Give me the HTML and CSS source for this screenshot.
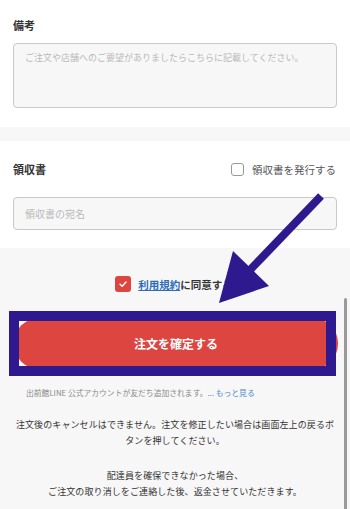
FILE: index.html
```html
<!DOCTYPE html>
<html lang="ja">
<head>
    <meta charset="UTF-8">
    <meta name="viewport" content="width=device-width, initial-scale=1.0">
    <title>注文確認</title>
    <link rel="stylesheet" href="styles.css">
</head>
<body>
    <div class="section note">
        <div class="label">備考</div>
        <textarea class="note-box" placeholder="ご注文や店舗へのご要望がありましたらこちらに記載してください。"></textarea>
    </div>

    <div class="section receipt">
        <div class="receipt-row">
            <div class="label">領収書</div>
            <label class="check-label">
                <span class="check-box"></span>
                領収書を発行する
            </label>
        </div>
        <input class="receipt-input" type="text" placeholder="領収書の宛名">
    </div>

    <div class="footer">
        <div class="agree">
            <span class="agree-box">
                <svg width="10" height="10" viewBox="0 0 10 10"><path d="M2 5.2 L4.2 7.2 L8 3" fill="none" stroke="#fff" stroke-width="1.4" stroke-linecap="round" stroke-linejoin="round"/></svg>
            </span>
            <a class="terms" href="#">利用規約</a><span class="agree-text">に同意する</span>
        </div>

        <div class="confirm">
            <button class="confirm-btn">注文を確定する</button>
            <div class="mark-frame"></div>
        </div>

        <p class="line-note">出前館LINE 公式アカウントが友だち追加されます。<a href="#">... もっと見る</a></p>

        <p class="notice">注文後のキャンセルはできません。注文を修正したい場合は画面左上の戻るボタンを押してください。</p>
        <p class="notice second">配達員を確保できなかった場合、<br>ご注文の取り消しをご連絡した後、返金させていただきます。</p>
    </div>

    <!-- annotation arrow -->
    <svg class="mark-arrow" width="120" height="120" viewBox="0 0 120 120">
        <line x1="111" y1="6" x2="40" y2="80" stroke="#2e1a8e" stroke-width="8"/>
        <polygon points="9,113 23,61 59,96" fill="#2e1a8e"/>
    </svg>

    <div class="scrollbar"></div>
</body>
</html>
```

FILE: styles.css
```css
:root {
    --gray-bg: #f7f7f7;
    --border: #c9c9c9;
    --red: #dd4541;
    --mark: #2e1a8e;
    --text: #333;
}

* {
    margin: 0;
    padding: 0;
    box-sizing: border-box;
    font-family: "Noto Sans CJK JP", "Noto Sans", sans-serif;
}

body {
    background: var(--gray-bg);
    color: var(--text);
    overflow: hidden;
}

.section {
    background: #fff;
    padding: 0 13px;
}

.note {
    padding-top: 17px;
    padding-bottom: 19px;
}

.label {
    font-size: 11px;
    font-weight: bold;
    line-height: 16px;
}

.note-box {
    display: block;
    width: 100%;
    height: 65px;
    margin-top: 10px;
    padding: 7px 11px;
    border: 1px solid var(--border);
    border-radius: 4px;
    background: var(--gray-bg);
    font-size: 9px;
    line-height: 14px;
    resize: none;
}

.note-box::placeholder,
.receipt-input::placeholder {
    color: #b9b9b9;
}

.receipt {
    margin-top: 14px;
    padding-top: 20px;
    padding-bottom: 18px;
}

.receipt-row {
    display: flex;
    justify-content: space-between;
    align-items: center;
    height: 16px;
}

.check-label {
    display: flex;
    align-items: center;
    gap: 8px;
    font-size: 10.5px;
    color: #555;
    margin-right: 1px;
}

.check-box {
    width: 13px;
    height: 13px;
    border: 1px solid #999;
    border-radius: 3px;
    background: #fff;
}

.receipt-input {
    display: block;
    width: 100%;
    height: 33px;
    margin-top: 20px;
    padding: 0 11px;
    border: 1px solid var(--border);
    border-radius: 4px;
    background: var(--gray-bg);
    font-size: 10px;
}

.agree {
    display: flex;
    justify-content: center;
    align-items: center;
    gap: 7px;
    margin-top: 28px;
    height: 16px;
    font-size: 10.5px;
    font-weight: bold;
    padding-right: 2px;
}

.agree-box {
    display: flex;
    align-items: center;
    justify-content: center;
    width: 16px;
    height: 16px;
    border-radius: 3px;
    background: var(--red);
}

.terms {
    color: #2b6cb7;
}

.agree-text {
    margin-left: -7px;
}

.confirm {
    position: relative;
    margin: 26px 12px 0 14px;
}

.confirm-btn {
    display: block;
    width: 100%;
    height: 51px;
    border: none;
    border-radius: 25px;
    background: var(--red);
    color: #fff;
    font-size: 12px;
    font-weight: bold;
}

.mark-frame {
    position: absolute;
    left: -5px;
    top: -7px;
    width: 327px;
    height: 65px;
    border: 10px solid var(--mark);
}

.line-note {
    margin-top: 18px;
    padding-left: 26px;
    font-size: 7.8px;
    line-height: 12px;
    color: #8a8a8a;
}

.line-note a {
    color: #4a88cc;
    text-decoration: none;
}

.notice {
    margin-top: 18px;
    padding: 0 15px;
    text-align: center;
    font-size: 9px;
    letter-spacing: 0.1px;
    line-height: 16px;
}

.notice.second {
    margin-top: 19px;
}

.mark-arrow {
    position: absolute;
    left: 210px;
    top: 190px;
}

.scrollbar {
    position: absolute;
    left: 344px;
    top: 298px;
    width: 2.5px;
    height: 220px;
    border-radius: 2px;
    background: #9a9a9a;
}
```
